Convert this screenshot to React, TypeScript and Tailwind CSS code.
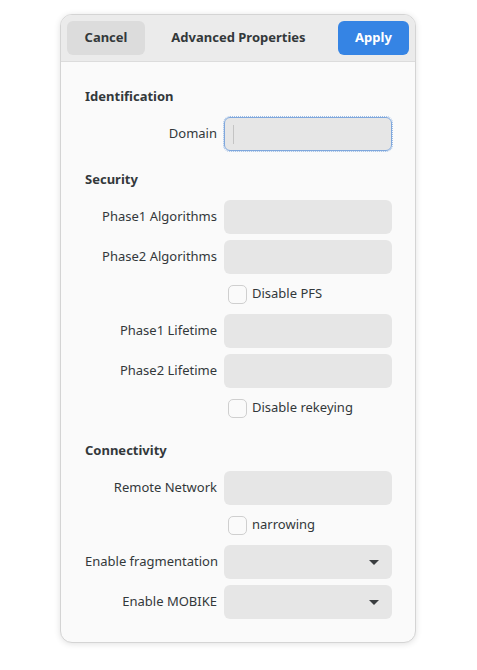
const Field = ({ label, focused, select }: { label: string; focused?: boolean; select?: boolean }) => {
  return (
    <div className="flex items-center gap-[7px]">
      <div className="w-[132px] whitespace-nowrap text-right">{label}</div>
      <div
        className={
          focused
            ? "relative flex h-[34px] w-[168px] items-center rounded-[6px] border border-[#7fa7dc] bg-[#e6e6e6] outline outline-1 outline-dotted outline-[#9dbde6]"
            : "relative flex h-[34px] w-[168px] items-center rounded-[6px] bg-[#e6e6e6]"
        }
      >
        {focused && <div className="ml-[8px] h-[19px] w-px bg-[#c4c4c4]" />}
        {select && (
          <svg className="absolute right-[13px] top-[15px]" width="10" height="5" viewBox="0 0 10 5">
            <path d="M0 0 L10 0 L5 5 Z" fill="#3a3d3f" />
          </svg>
        )}
      </div>
    </div>
  );
};

const Check = ({ label }: { label: string }) => {
  return (
    <div className="flex h-[28px] items-center pl-[143px]">
      <div className="h-[19px] w-[19px] rounded-[5px] border border-[#cfcfcf] bg-[#fafafa]" />
      <div className="ml-[5px]">{label}</div>
    </div>
  );
};

const Section = ({ title, children }: { title: string; children: React.ReactNode }) => {
  return (
    <div className="flex flex-col">
      <div className="mb-[11px] h-5 font-bold leading-5">{title}</div>
      <div className="flex flex-col gap-[6px]">{children}</div>
    </div>
  );
};

export default function App() {
  return (
    <div
      className="min-h-[670px] bg-white pl-[60px] pt-[14px] text-[13px] text-[#33383a]"
      style={{ fontFamily: '"Noto Sans", sans-serif' }}
    >
      <div className="h-[629px] w-[356px] overflow-hidden rounded-[12px] border border-[#d4d4d4] bg-[#fafafa] shadow-[0_1px_6px_rgba(0,0,0,0.12)]">
        <div className="flex h-[47px] items-center justify-between border-b border-[#dcdcdc] bg-[#ebebeb] px-[6px]">
          <div className="flex h-[34px] w-[78px] items-center justify-center rounded-[6px] bg-[#dcdcdc] font-bold">
            Cancel
          </div>
          <div className="pr-[6px] font-bold">Advanced Properties</div>
          <div className="flex h-[34px] w-[71px] items-center justify-center rounded-[6px] bg-[#3584e4] font-bold text-white">
            Apply
          </div>
        </div>
        <div className="flex flex-col gap-[18px] pl-[24px] pt-[24px]">
          <Section title="Identification">
            <Field label="Domain" focused />
          </Section>
          <Section title="Security">
            <Field label="Phase1 Algorithms" />
            <Field label="Phase2 Algorithms" />
            <Check label="Disable PFS" />
            <Field label="Phase1 Lifetime" />
            <Field label="Phase2 Lifetime" />
            <Check label="Disable rekeying" />
          </Section>
          <Section title="Connectivity">
            <Field label="Remote Network" />
            <Check label="narrowing" />
            <Field label="Enable fragmentation" select />
            <Field label="Enable MOBIKE" select />
          </Section>
        </div>
      </div>
    </div>
  );
}
